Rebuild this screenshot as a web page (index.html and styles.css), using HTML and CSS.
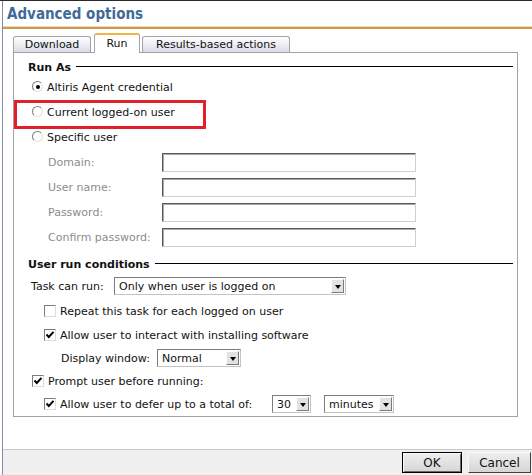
FILE: index.html
```html
<!DOCTYPE html>
<html>
<head>
<meta charset="utf-8">
<link rel="stylesheet" href="styles.css">
</head>
<body>
<div class="frame">
  <div class="window">
    <div class="titlebar">Advanced options</div>
    <div class="tabs">
      <div class="tab tab-download">Download</div>
      <div class="tab tab-run active">Run</div>
      <div class="tab tab-results">Results-based actions</div>
    </div>
    <div class="panel">
      <div class="sect">Run As</div>
      <div class="row opt"><span class="radio checked"></span>Altiris Agent credential</div>
      <div class="row opt"><span class="radio"></span>Current logged-on user</div>
      <div class="row opt"><span class="radio"></span>Specific user</div>
      <div class="row field"><span class="flabel">Domain:</span><span class="input"></span></div>
      <div class="row field"><span class="flabel">User name:</span><span class="input"></span></div>
      <div class="row field"><span class="flabel">Password:</span><span class="input"></span></div>
      <div class="row field"><span class="flabel">Confirm password:</span><span class="input"></span></div>
      <div class="sect sect2">User run conditions</div>
      <div class="row task"><span class="tlabel">Task can run:</span><span class="select sel-task"><span class="val">Only when user is logged on</span><span class="arrow"></span></span></div>
      <div class="row chk indent"><span class="cbox"></span>Repeat this task for each logged on user</div>
      <div class="row chk indent"><span class="cbox checked"><svg viewBox="0 0 12 12" width="12" height="12"><path d="M2.5 5.5 L4.8 8 L9.5 2.8" fill="none" stroke="#000" stroke-width="1.9"/></svg></span>Allow user to interact with installing software</div>
      <div class="row disp"><span class="dlabel">Display window:</span><span class="select sel-disp"><span class="val">Normal</span><span class="arrow"></span></span></div>
      <div class="row chk prompt"><span class="cbox checked"><svg viewBox="0 0 12 12" width="12" height="12"><path d="M2.5 5.5 L4.8 8 L9.5 2.8" fill="none" stroke="#000" stroke-width="1.9"/></svg></span>Prompt user before running:</div>
      <div class="row chk indent defer"><span class="cbox checked"><svg viewBox="0 0 12 12" width="12" height="12"><path d="M2.5 5.5 L4.8 8 L9.5 2.8" fill="none" stroke="#000" stroke-width="1.9"/></svg></span><span class="deftext">Allow user to defer up to a total of:</span><span class="select sel-num"><span class="val">30</span><span class="arrow"></span></span><span class="select sel-unit"><span class="val">minutes</span><span class="arrow"></span></span></div>
    </div>
    <div class="spacer"></div>
    <div class="footer">
      <span class="btn default">OK</span>
      <span class="btn cancel">Cancel</span>
    </div>
  </div>
  <div class="highlight"></div>
</div>
</body>
</html>
```
FILE: styles.css
```css
* { box-sizing: border-box; }
html, body { margin: 0; padding: 0; }
body {
  width: 532px;
  height: 475px;
  overflow: hidden;
  background: #fff;
  font-family: "DejaVu Sans", sans-serif;
  font-size: 11px;
  color: #111;
}
.frame {
  position: relative;
  height: 475px;
  border-top: 1px solid #2a2a2a;
  padding-left: 2px;
  display: flex;
}
.window {
  flex: 1;
  border-left: 1px solid #7f8da6;
  display: flex;
  flex-direction: column;
}
.titlebar {
  height: 28px;
  padding-left: 4px;
  display: flex;
  align-items: center;
  font-family: "DejaVu Sans Condensed", "DejaVu Sans", sans-serif;
  font-weight: bold;
  font-size: 15px;
  color: #41699a;
  border-bottom: 2px solid #c99b58;
  box-shadow: inset 0 -1px 0 #f3d8a6;
}
.tabs {
  margin-top: 4px;
  height: 19px;
  padding-left: 10px;
  display: flex;
  align-items: flex-end;
}
.tab {
  height: 16px;
  border: 1px solid #a2a2a8;
  border-bottom: none;
  border-radius: 3px 3px 0 0;
  background: linear-gradient(#ffffff, #dcdce8);
  display: flex;
  align-items: center;
  justify-content: center;
  color: #111;
}
.tab-download { width: 78px; margin-right: 3px; }
.tab-run { width: 46px; margin-right: 2px; }
.tab-results { width: 148px; }
.tab.active {
  position: relative;
  z-index: 1;
  height: 20px;
  margin-bottom: -1px;
  background: #fff;
  border-top: 2px solid #f0b545;
  padding-bottom: 2px;
}
.panel {
  margin-left: 10px;
  width: 505px;
  height: 365px;
  border: 1px solid #a2a2a2;
  padding: 6px 4px 0 0;
  display: flex;
  flex-direction: column;
}
.sect {
  height: 16px;
  padding-left: 14px;
  font-weight: bold;
  display: flex;
  align-items: center;
}
.sect::after {
  content: "";
  flex: 1;
  border-top: 1px solid #000;
  margin-left: 5px;
  margin-top: -2px;
}
.sect2 { margin-top: 6px; height: 17px; }
.row {
  display: flex;
  align-items: center;
  height: 25px;
  white-space: nowrap;
}
.opt { padding-left: 18px; }
.radio {
  width: 11px;
  height: 11px;
  border-radius: 50%;
  border: 1px solid;
  border-color: #7c7c7c #e2e2e2 #e2e2e2 #7c7c7c;
  background: #fff;
  margin-right: 4px;
  display: flex;
  align-items: center;
  justify-content: center;
  margin-top: -2px;
}
.radio.checked::after {
  content: "";
  width: 4px;
  height: 4px;
  border-radius: 50%;
  background: #000;
}
.field { padding-left: 34px; color: #8c8c8c; }
.flabel { width: 114px; }
.input {
  width: 254px;
  height: 19px;
  border: 1px solid;
  border-color: #5a5a5a #cfcfcf #cfcfcf #5a5a5a;
  box-shadow: inset 1px 1px 0 #a8a8a8;
  background: #fff;
}
.task { height: 26px; padding-left: 17px; }
.tlabel { width: 83px; }
.select {
  display: flex;
  align-items: center;
  height: 18px;
  border: 1px solid;
  border-color: #7c7c7c #c4c4c4 #c4c4c4 #7c7c7c;
  background: #fff;
  padding-right: 1px;
}
.select .val { flex: 1; padding-left: 4px; }
.select .arrow {
  width: 13px;
  height: 14px;
  background: #e2e2e2;
  border: 1px solid;
  border-color: #fdfdfd #7a7a7a #7a7a7a #fdfdfd;
  display: flex;
  align-items: center;
  justify-content: center;
}
.select .arrow::after {
  content: "";
  border-left: 3.5px solid transparent;
  border-right: 3.5px solid transparent;
  border-top: 4px solid #000;
  margin-top: 1px;
}
.sel-task { width: 232px; }
.chk { height: 24px; }
.indent { padding-left: 30px; }
.prompt { padding-left: 18px; }
.cbox {
  width: 12px;
  height: 12px;
  border: 1px solid;
  border-color: #7c7c7c #dcdcdc #dcdcdc #7c7c7c;
  background: #fff;
  margin-right: 4px;
  display: flex;
  margin-top: -1px;
}
.cbox svg { margin: -1px; }
.disp { height: 22px; padding-left: 47px; }
.dlabel { width: 96px; }
.sel-disp { width: 84px; }
.defer { height: 22px; }
.deftext { width: 212px; }
.sel-num { width: 39px; margin-right: 13px; }
.sel-unit { width: 70px; }
.spacer { flex: 1; }
.footer {
  height: 26px;
  border-top: 1px solid #c8c8c8;
  background: #f0f0f0;
  display: flex;
  justify-content: flex-end;
  align-items: flex-start;
  padding: 2px 1px 0 0;
  gap: 6px;
}
.btn {
  height: 21px;
  display: flex;
  align-items: center;
  justify-content: center;
  font-size: 12px;
  background: linear-gradient(#eeeeee, #d6d6d6);
  border: 1px solid;
  border-color: #f8f8f8 #404040 #404040 #f8f8f8;
  color: #111;
}
.btn.default {
  width: 60px;
  border: 1px solid #000;
  box-shadow: inset 1px 1px 0 #fafafa, inset -1px -1px 0 #6a6a6a;
}
.btn.cancel { width: 63px; }
.highlight {
  position: absolute;
  left: 14px;
  top: 99px;
  width: 192px;
  height: 29px;
  border: 3px solid #e3202a;
}
```
